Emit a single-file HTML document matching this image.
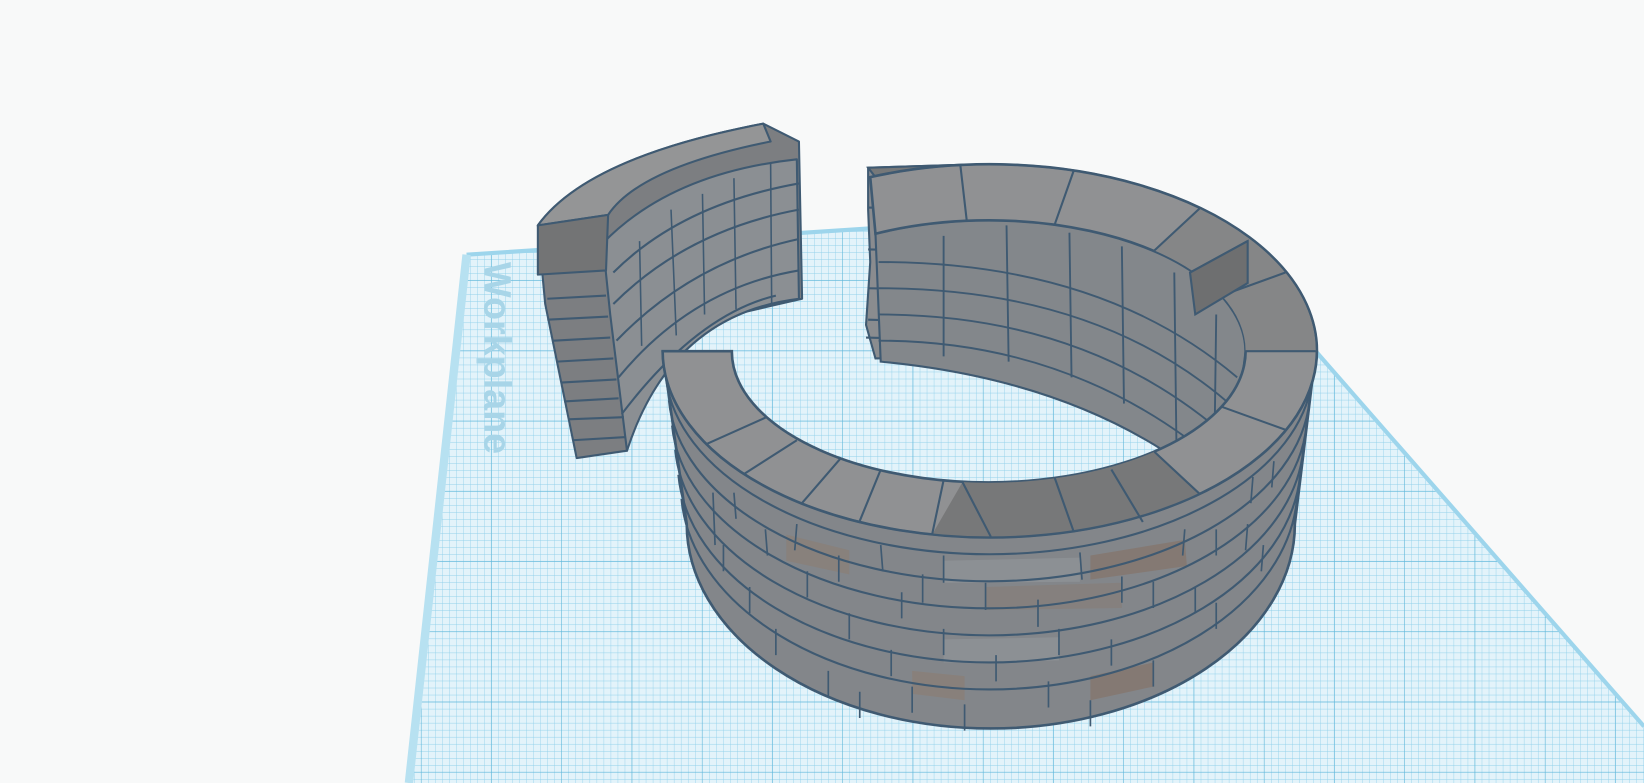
<!DOCTYPE html>
<html><head><meta charset="utf-8"><style>
html,body{margin:0;padding:0;background:#f8f9f9;}
svg{display:block}
</style></head><body>
<svg width="1644" height="783" viewBox="0 0 1568 747" preserveAspectRatio="none" xmlns="http://www.w3.org/2000/svg">
<defs>
<pattern id="fine" width="6.7" height="6.7" patternUnits="userSpaceOnUse">
<path d="M6.7 0V6.7M0 6.7H6.7" stroke="#8fd0ea" stroke-width="0.8" fill="none"/>
</pattern>
<pattern id="coarse" width="67" height="67" patternUnits="userSpaceOnUse">
<path d="M67 0V67M0 67H67" stroke="#5eb6d9" stroke-width="1.1" fill="none"/>
</pattern>
<clipPath id="wp"><path d="M445,243 L1135,198 L1568,693 L1568,747 L390,747 Z"/></clipPath>
</defs>
<rect width="1568" height="747" fill="#f8f9f9"/>
<g clip-path="url(#wp)">
<rect width="1568" height="747" fill="#e3f3fa"/>
<rect width="1568" height="747" fill="url(#fine)"/>
<rect width="1568" height="747" fill="url(#coarse)"/>
</g>
<path d="M445,243 L1135,198 L1568,693" stroke="#9dd5ec" stroke-width="4" fill="none"/>
<path d="M445,243 L390,747" stroke="#b7e1f1" stroke-width="8" fill="none"/>
<text x="0" y="0" transform="translate(462,250) rotate(90)" font-family="Liberation Sans, sans-serif" font-size="36" font-weight="bold" fill="#a8d5e8">Workplane</text>

<!-- separate piece -->
<g stroke="#3f5a72" stroke-width="2" stroke-linejoin="round">
<path d="M513,215 Q560,150 728,118 L762,135 L765,285 L700,300 Q620,330 598,430 L550,437 L520,290 Z" fill="#7c7e81"/>
<path d="M575,232 Q640,165 760,152 L762,285 Q640,300 598,430 L582,300 Z" fill="#8b8f93"/>
<path d="M513,215 Q560,150 728,118 L735,135 Q610,160 580,205 Z" fill="#949596"/>
<path d="M513,215 L580,205 L578,258 L513,262 Z" fill="#737475"/>
<path d="M522,285 L578,282 M528,325 L582,322 M535,365 L588,362 M542,400 L595,398 M522,305 L580,302 M531,345 L585,342 M538,383 L590,380 M546,420 L597,417" fill="none"/>
<path d="M585,260 Q650,195 762,175 M585,290 Q655,220 762,200 M588,325 Q660,250 762,228 M590,360 Q660,275 762,258 M593,395 Q665,300 740,282" fill="none"/>
<path d="M610,230 L612,330 M640,200 L645,320 M670,185 L672,300 M700,170 L702,295 M735,155 L736,290" fill="none" stroke-width="1.5"/>
</g>

<!-- cut face of main ring -->
<g stroke="#3f5a72" stroke-width="2">
<path d="M828,160 L925,157 L942,205 L940,340 L835,342 L826,310 L830,250 L828,200 Z" fill="#8a8c8f"/>
<path d="M828,198 L940,200 M828,238 L940,240 M828,275 L940,277 M828,305 L940,308 M826,322 L940,325" fill="none"/>
<path d="M842,178 L935,176 L925,157 L828,160 Z" fill="#767879"/>
</g>

<!-- inner back wall -->
<path d="M835,223 A245,125 0 0 1 1188,335 L1170,480 L1110,430 Q1000,360 840,345 Z" fill="#83878b" stroke="#3f5a72" stroke-width="2"/>
<g stroke="#3f5a72" stroke-width="1.8" fill="none">
<path d="M838,250 Q1050,250 1180,360"/>
<path d="M838,275 Q1050,275 1178,390"/>
<path d="M838,300 Q1040,300 1174,420"/>
<path d="M838,325 Q1030,325 1172,450"/>
<path d="M900,225 L900,340 M960,215 L962,345 M1020,222 L1022,360 M1070,235 L1072,385 M1120,260 L1122,420 M1160,300 L1158,450"/>
</g>

<!-- outer wall -->
<path d="M632,335 A312,178 0 0 0 1255,335 L1235,500 A290,195 0 0 1 655,500 Z" fill="#83868a" stroke="#3f5a72" stroke-width="2.5"/>
<g fill="#8e9296" opacity="0.85">
<path d="M900,535 L1030,532 L1030,555 L900,556 Z"/>
<path d="M940,560 L1070,556 L1070,580 L940,582 Z" fill="#86807c"/>
<path d="M900,610 L1010,608 L1010,630 L900,632 Z"/>
<path d="M1040,530 L1130,515 L1132,540 L1040,553 Z" fill="#85776f"/>
<path d="M750,510 L810,525 L810,548 L750,535 Z" fill="#8a8079"/>
<path d="M1040,645 L1100,632 L1100,655 L1040,668 Z" fill="#85776f"/>
<path d="M870,640 L920,645 L920,668 L870,662 Z" fill="#8a8079"/>
</g>
<g stroke="#3f5a72" stroke-width="2" fill="none">
<path d="M635,359 A309,180 0 0 0 1252,359"/>
<path d="M638,382 A306,183 0 0 0 1249,382"/>
<path d="M641,406 A303,185 0 0 0 1246,406"/>
<path d="M644,429 A300,188 0 0 0 1243,429"/>
<path d="M647,453 A297,190 0 0 0 1240,453"/>
<path d="M650,476 A294,193 0 0 0 1237,476"/>
</g>
<g stroke="#3f5a72" stroke-width="1.6" fill="none">
<path d="M700,470 L702,495 M760,500 L758,525 M840,520 L842,545 M900,530 L900,556 M1030,527 L1032,553 M1130,505 L1128,530 M1195,455 L1193,480"/>
<path d="M680,470 L682,520 M730,505 L732,530 M800,530 L800,555 M880,548 L880,575 M940,556 L940,582 M1070,550 L1070,575 M1160,505 L1160,530 M1215,440 L1213,465"/>
<path d="M690,520 L690,545 M770,545 L770,570 M860,565 L860,590 M990,572 L990,598 M1100,555 L1100,580 M1190,500 L1188,525"/>
<path d="M715,560 L715,585 M810,585 L810,610 M900,600 L900,625 M1010,600 L1010,625 M1140,560 L1140,585 M1205,520 L1203,545"/>
<path d="M740,600 L740,625 M850,620 L850,645 M950,625 L950,650 M1060,610 L1060,635 M1160,575 L1160,600"/>
<path d="M790,640 L790,665 M870,655 L870,680 M1000,650 L1000,675 M1100,630 L1100,655"/>
<path d="M820,660 L820,685 M920,672 L920,697 M1040,668 L1040,693"/>
</g>

<!-- top ring -->
<path d="M632,335 A312,178 0 1 0 830,169 L835,223 A245,125 0 1 1 698,335 Z" fill="#909193" stroke="#3f5a72" stroke-width="2.5"/>
<path d="M889,510 A312,178 0 0 0 1144,471 L1101,431 A245,125 0 0 1 918,460 Z" fill="#777879"/>
<path d="M1255,335 A312,178 0 0 0 1144,199 L1101,239 A245,125 0 0 1 1188,335 Z" fill="#858687"/>
<g stroke="#3f5a72" stroke-width="2" fill="none">
<path d="M632,335 A312,178 0 1 0 830,169"/>
<path d="M673,424 L731,398 M764,481 L802,437 M889,510 L900,458 M918,460 L945,512 M1024,507 L1006,456 M1090,498 L1060,448 M1144,471 L1101,431 M1226,410 L1165,388 M1255,335 L1188,335 M1226,260 L1165,282 M1144,199 L1101,239 M1024,163 L1006,214 M916,158 L922,210 M1190,230 L1135,260 M710,452 L760,420 M820,497 L840,448"/>
<path d="M1190,230 L1135,260 L1140,300 L1190,270 Z" fill="#6e6f70"/>
</g>
</svg>
</body></html>
